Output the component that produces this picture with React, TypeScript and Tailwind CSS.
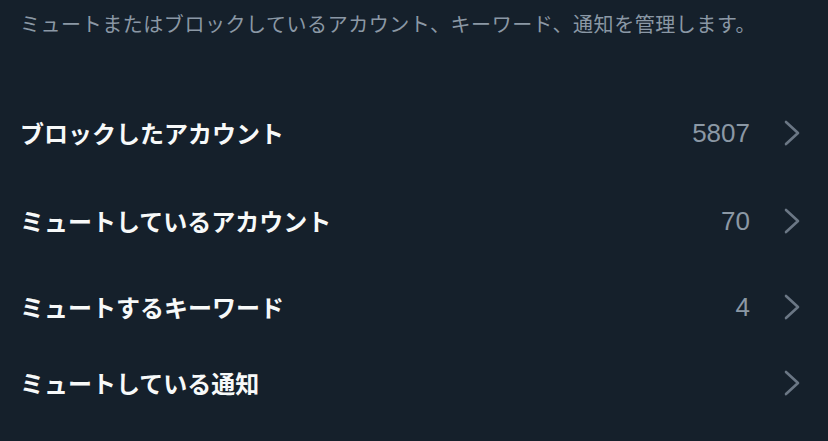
import React from "react";

const rows = [
  { label: "ブロックしたアカウント", count: "5807", h: "h-[88px]" },
  { label: "ミュートしているアカウント", count: "70", h: "h-[88px]" },
  { label: "ミュートするキーワード", count: "4", h: "h-[84px]" },
  { label: "ミュートしている通知", count: "", h: "h-[68px]" },
];

function Chevron() {
  return (
    <svg width="16" height="26" viewBox="0 0 16 26" className="shrink-0">
      <polyline
        points="2,2 14,13 2,24"
        fill="none"
        stroke="#6b7785"
        strokeWidth="2.6"
        strokeLinecap="round"
        strokeLinejoin="round"
      />
    </svg>
  );
}

export default function App() {
  return (
    <div
      className="w-[828px] h-[441px] bg-[#15202b] overflow-hidden flex flex-col"
      style={{ fontFamily: '"Noto Sans CJK JP", "Noto Sans", sans-serif' }}
    >
      <p className="pl-[20px] pt-[10px] text-[20px] leading-[28px] tracking-[0.55px] text-[#8b98a5] whitespace-nowrap">
        ミュートまたはブロックしているアカウント、キーワード、通知を管理します。
      </p>
      <div className="mt-[51px] flex flex-col">
        {rows.map((r) => (
          <div
            key={r.label}
            className={`${r.h} flex items-center pl-[20px] pr-[28px]`}
          >
            <span className="flex-1 text-[24px] font-bold text-[#f7f9f9] leading-none">
              {r.label}
            </span>
            <span
              className="text-[26px] text-[#8b98a5] leading-none mr-[34px]"
              style={{ fontFamily: '"Liberation Sans", Arial, sans-serif' }}
            >
              {r.count}
            </span>
            <Chevron />
          </div>
        ))}
      </div>
    </div>
  );
}
